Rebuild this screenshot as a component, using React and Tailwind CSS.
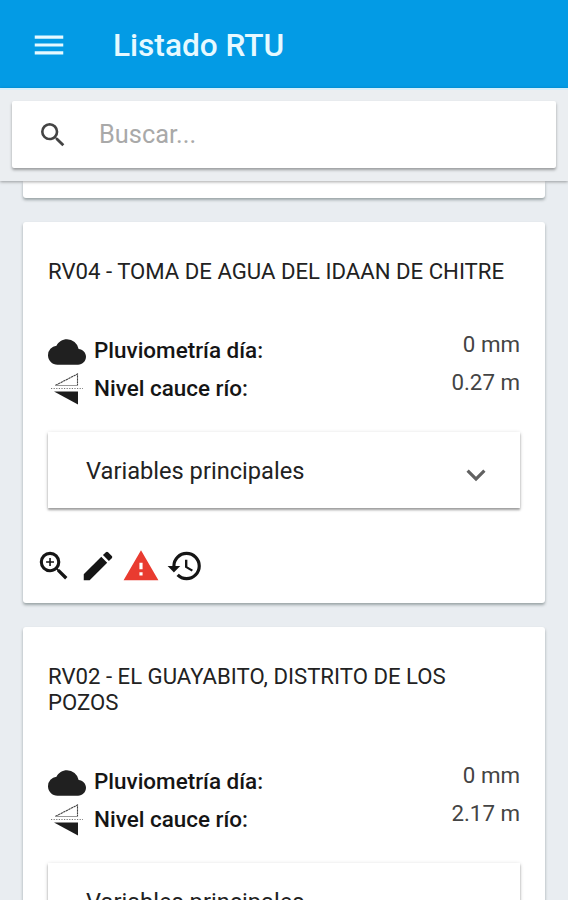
import React from 'react';
import {
  MdMenu,
  MdSearch,
  MdCloud,
  MdZoomIn,
  MdEdit,
  MdWarning,
  MdHistory,
  MdExpandMore,
} from 'react-icons/md';

const stations = [
  { id: 'RV04', name: 'TOMA DE AGUA DEL IDAAN DE CHITRE', rain: '0 mm', level: '0.27 m' },
  { id: 'RV02', name: 'EL GUAYABITO, DISTRITO DE LOS POZOS', rain: '0 mm', level: '2.17 m' },
];

// River level: outlined triangle mirrored over a dotted water line
const LevelIcon = () => (
  <svg viewBox="0 0 38 38" className="size-[38px] shrink-0" fill="none">
    <path d="M7.5 14.3 L29.5 3 V14.5" stroke="#444" strokeWidth="1.1" strokeDasharray="2.4 0.5" />
    <path d="M7 14.5 H29.5" stroke="#999" strokeWidth="1" />
    <path d="M3 17.5 H35" stroke="#777" strokeWidth="1" strokeDasharray="1.2 1.4" />
    <path d="M6 20.6 H30 V33.5 Z" fill="#1c1c1c" />
  </svg>
);

const Header = () => (
  <header className="flex h-[88px] shrink-0 items-center bg-[#039be5] pl-[30px] pt-[2px] text-[#e6f9ff]">
    <MdMenu className="size-[38px]" />
    <h1 className="ml-[45px] pt-[2px] text-[31.6px] leading-none font-medium">Listado RTU</h1>
  </header>
);

const SearchBar = () => (
  <div className="z-10 h-[93px] shrink-0 border-t-2 border-[#d5effb] bg-[#ebeef1] px-[12px] pt-[11px] shadow-[0_1px_3px_rgba(0,0,0,0.35)]">
    <div className="flex h-[67px] items-center rounded-[2px] bg-white pl-[25px] shadow-[0_2px_3px_rgba(0,0,0,0.35)]">
      <MdSearch className="size-8 text-[#444]" />
      <span className="ml-[30px] text-[25.4px] leading-none text-[#a9a9a9]">Buscar...</span>
    </div>
  </div>
);

const Variable = ({ icon, label, value }) => (
  <div className="flex h-[38px]">
    {icon}
    <span className="ml-2 pt-[4px] text-[22.45px] leading-[26px] font-medium text-[#151515]">{label}</span>
    <span className="-mt-[2px] ml-auto text-[22.3px] leading-[26px] text-[#444]">{value}</span>
  </div>
);

const StationCard = ({ station }) => (
  <article className="shrink-0 rounded-[3px] bg-white px-[25px] pt-[36px] pb-[18px] shadow-[0_2px_3px_rgba(60,75,75,0.45)]">
    <h2 className="text-[22.17px] leading-[26px] text-[#222]">{`${station.id} - ${station.name}`}</h2>
    <div className="mt-[49px]">
      <Variable
        icon={<MdCloud className="size-[38px] shrink-0 text-[#202020]" />}
        label="Pluviometría día:"
        value={station.rain}
      />
      <Variable icon={<LevelIcon />} label="Nivel cauce río:" value={station.level} />
    </div>
    <button className="mt-[23px] flex h-[76px] w-full items-center justify-between bg-white pr-[25px] pl-[38px] shadow-[0_1px_4px_rgba(0,0,0,0.18),0_2px_2px_rgba(0,0,0,0.3)]">
      <span className="pt-[3px] text-[23.65px] leading-none text-[#222]">Variables principales</span>
      <MdExpandMore className="mt-[9px] size-[38px] text-[#616161]" />
    </button>
    <div className="-ml-[13px] mt-[39px] flex gap-[5.6px] text-[#151515]">
      <MdZoomIn className="size-[38px]" />
      <MdEdit className="size-[38px]" />
      <MdWarning className="size-[38px] text-[#e93b30]" />
      <MdHistory className="size-[38px]" />
    </div>
  </article>
);

export default function App() {
  return (
    <div className="flex h-[900px] w-[568px] flex-col overflow-hidden bg-[#e9edf1] font-[Roboto,sans-serif]">
      <Header />
      <SearchBar />
      <main className="flex min-h-0 flex-1 flex-col gap-6 overflow-hidden px-[23px]">
        {/* end of the previous card, scrolled under the search bar */}
        <div className="h-[17px] shrink-0 rounded-b-[3px] bg-white shadow-[0_2px_3px_rgba(60,75,75,0.45)]" />
        {stations.map((station) => (
          <StationCard key={station.id} station={station} />
        ))}
      </main>
    </div>
  );
}
